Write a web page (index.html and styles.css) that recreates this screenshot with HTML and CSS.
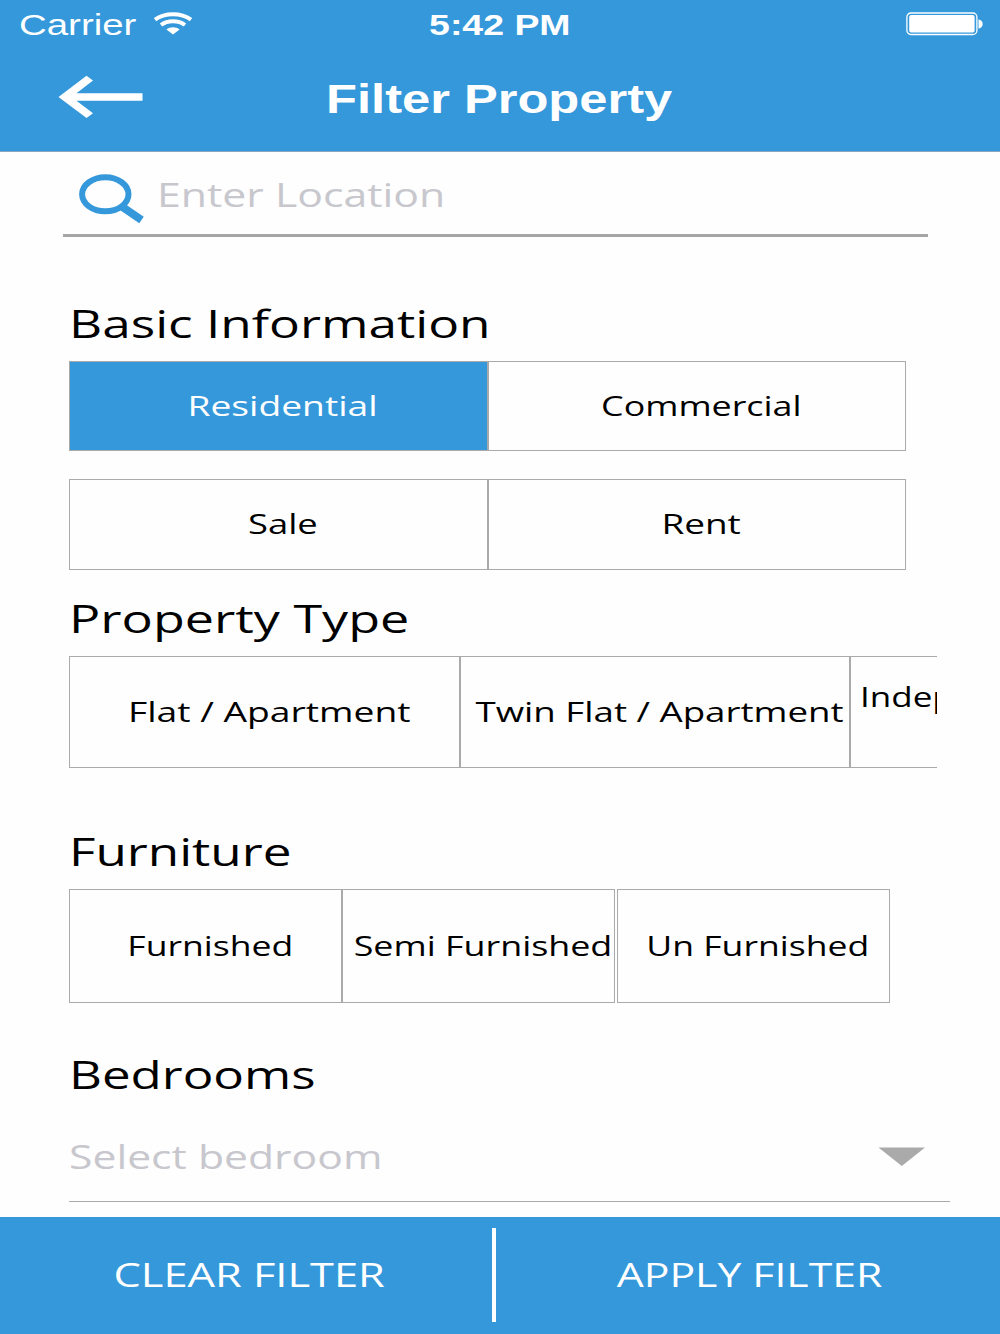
FILE: index.html
```html
<!DOCTYPE html>
<html lang="en">
<head>
    <meta charset="UTF-8">
    <meta name="viewport" content="width=device-width, initial-scale=1.0">
    <title>Filter Property</title>
    <link rel="stylesheet" href="styles.css">
</head>
<body>
    <header class="header">
        <div class="status-bar">
            <div class="carrier">
                <span class="wide carrier-name">Carrier</span>
                <svg class="wifi" width="40" height="24" viewBox="0 0 40 24" fill="none" stroke="#fff">
                    <path d="M2 7.6 C12 0.4 28 0.4 38 7.6" stroke-width="4"/>
                    <path d="M8 13 C14.5 8 25.5 8 32 13" stroke-width="3.8"/>
                    <path d="M13.4 17.6 C17 14.6 23 14.6 26.6 17.6 L20 22.5 Z" fill="#fff" stroke="none"/>
                </svg>
            </div>
            <span class="wide time">5:42 PM</span>
            <svg class="battery" width="78" height="24" viewBox="0 0 78 24">
                <rect x="0.9" y="1" width="70" height="21.5" rx="4" fill="none" stroke="#fff" stroke-width="1.3"/>
                <rect x="3.2" y="3" width="65.4" height="17.6" rx="2" fill="#fff"/>
                <path d="M72.5 7.5 C78 7.5 78 16.5 72.5 16.5 Z" fill="#fff"/>
            </svg>
        </div>
        <div class="nav-bar">
            <svg class="back" width="86" height="44" viewBox="0 0 86 44">
                <path d="M0.5 22 L28.5 0.8 L35 5.5 L18.5 18.3 H84.5 V25.7 H18.5 L35 38.2 L28.5 43 Z" fill="#fff"/>
            </svg>
            <h1 class="wide">Filter Property</h1>
        </div>
    </header>

    <main class="filters">
        <div class="search">
            <svg class="search-icon" width="68" height="52" viewBox="0 0 68 52" fill="none" stroke="#3498db">
                <ellipse cx="28.3" cy="21.3" rx="23.2" ry="17" stroke-width="6"/>
                <path d="M44 33 L64.5 47" stroke-width="8"/>
            </svg>
            <span class="wide placeholder location">Enter Location</span>
        </div>

        <section class="basic">
            <h2><span class="wide w-basic">Basic Information</span></h2>
            <div class="options">
                <div class="option active"><span class="wide w-residential">Residential</span></div>
                <div class="option"><span class="wide w-commercial">Commercial</span></div>
            </div>
            <div class="options second">
                <div class="option"><span class="wide w-sale">Sale</span></div>
                <div class="option"><span class="wide w-rent">Rent</span></div>
            </div>
        </section>

        <section class="type">
            <h2><span class="wide w-type">Property Type</span></h2>
            <div class="options scroller">
                <div class="option"><span class="wide w-flat">Flat / Apartment</span></div>
                <div class="option"><span class="wide w-twin">Twin Flat / Apartment</span></div>
                <div class="option house"><span class="wide w-house">Independent House</span></div>
            </div>
        </section>

        <section class="furniture">
            <h2><span class="wide w-furniture">Furniture</span></h2>
            <div class="options">
                <div class="option"><span class="wide w-furnished">Furnished</span></div>
                <div class="option"><span class="wide w-semi">Semi Furnished</span></div>
                <div class="option last"><span class="wide w-un">Un Furnished</span></div>
            </div>
        </section>

        <section class="bedrooms">
            <h2><span class="wide w-bedrooms">Bedrooms</span></h2>
            <div class="select">
                <span class="wide placeholder w-select">Select bedroom</span>
                <svg class="caret" width="48" height="20" viewBox="0 0 48 20">
                    <path d="M0.5 0.5 H47 L23.8 19 Z" fill="#aaa"/>
                </svg>
            </div>
        </section>
    </main>

    <footer class="footer">
        <div class="action clear"><span class="wide w-clear">CLEAR FILTER</span></div>
        <div class="divider"></div>
        <div class="action apply"><span class="wide w-apply">APPLY FILTER</span></div>
    </footer>
</body>
</html>
```

FILE: styles.css
```css
:root {
    --primary-color: #3498db;
    --line-color: #aaa;
    --placeholder-color: #c7c7cd;
}
* {
    box-sizing: border-box;
}
body {
    margin: 0;
    width: 1000px;
    height: 1334px;
    overflow: hidden;
    display: flex;
    flex-direction: column;
    background-color: #fefefe;
    color: #000;
    font-family: "Open Sans", "Noto Sans", sans-serif;
}
svg {
    display: block;
    flex: none;
}
/* labels are set in an extended width */
.wide {
    display: inline-block;
    white-space: nowrap;
    flex: none;
    transform: scaleX(var(--stretch, 1.3));
}
.w-basic { --stretch: 1.333; }
.w-type { --stretch: 1.352; }
.w-furniture { --stretch: 1.33; }
.w-bedrooms { --stretch: 1.325; }
.w-select { --stretch: 1.334; }
.w-residential { --stretch: 1.328; }
.w-commercial { --stretch: 1.28; }
.w-rent { --stretch: 1.32; }
.w-flat { --stretch: 1.33; }
.w-twin { --stretch: 1.31; }
.w-house { --stretch: 1.25; }
.w-furnished { --stretch: 1.27; }
.w-semi { --stretch: 1.28; }
.w-un { --stretch: 1.27; }
.w-clear { --stretch: 1.355; }
.w-apply { --stretch: 1.335; }

/* header */
.header {
    height: 152px;
    flex: none;
    background-color: var(--primary-color);
    border-bottom: 1px solid #8aa5c0;
    color: #fff;
    font-family: "Liberation Sans", Arial, sans-serif;
}
.status-bar {
    height: 48px;
    display: grid;
    grid-template-columns: 1fr auto 1fr;
    align-items: center;
    padding: 0 16px;
}
.carrier {
    display: flex;
    align-items: center;
    padding-left: 3px;
}
.carrier-name {
    --stretch: 1.28;
    width: 134px;
    margin-top: 2px;
    font-size: 30px;
    transform-origin: left;
}
.wifi {
    margin-top: -1px;
}
.time {
    --stretch: 1.29;
    margin-top: 2px;
    font-size: 29px;
    font-weight: bold;
}
.battery {
    justify-self: end;
}
.nav-bar {
    height: 103px;
    display: grid;
    grid-template-columns: 1fr auto 1fr;
    align-items: center;
    padding-left: 57px;
    padding-right: 59px;
}
.back {
    margin-top: -5px;
    margin-left: 1px;
}
h1 {
    --stretch: 1.235;
    margin: -2px 0 0;
    font-size: 41px;
    line-height: 46px;
    font-weight: bold;
}

/* search */
.search {
    width: 865px;
    height: 85px;
    margin-left: 63px;
    padding-left: 14px;
    display: flex;
    align-items: center;
    border-bottom: 3px solid #a6a6a6;
}
.search-icon {
    margin-top: 12px;
    margin-right: 12px;
}
.placeholder {
    font-size: 32px;
    line-height: 44px;
    color: var(--placeholder-color);
    transform-origin: left;
}
.location {
    --stretch: 1.337;
    margin-top: 3px;
}

/* option groups */
.filters {
    flex: 1;
}
section {
    padding-left: 69px;
}
h2 {
    margin: 0 0 16px;
    height: 44px;
    font-size: 38.5px;
    line-height: 44px;
    font-weight: normal;
}
h2 .wide {
    transform-origin: left;
}
.options {
    display: flex;
}
.option {
    display: flex;
    flex: none;
    align-items: center;
    justify-content: center;
    padding: 0 0 2px 9px;
    border: 1px solid var(--line-color);
    font-size: 28px;
    line-height: 36px;
}
.active {
    background-color: var(--primary-color);
    color: #fff;
}
.basic {
    margin-top: 64px;
}
.basic .option {
    width: 418.5px;
    height: 90px;
}
.second {
    margin-top: 28px;
}
.basic .second .option {
    height: 91px;
    padding-bottom: 3px;
}
.type {
    margin-top: 26px;
}
.scroller {
    width: 868px;
    overflow: hidden;
}
.type .option {
    width: 390.5px;
    height: 112px;
}
.type .house {
    justify-content: flex-start;
    padding-bottom: 32px;
}
.house .wide {
    transform-origin: left;
}
.furniture {
    margin-top: 61px;
}
.furniture .option {
    width: 273px;
    height: 114px;
}
.furniture .last {
    margin-left: 2px;
}
.bedrooms {
    margin-top: 49px;
}
.bedrooms h2 {
    margin-bottom: 0;
}
.select {
    width: 881px;
    height: 106px;
    padding: 17px 24px 0 0;
    display: flex;
    align-items: center;
    justify-content: space-between;
    border-bottom: 1px solid var(--line-color);
}

/* footer */
.footer {
    height: 117px;
    flex: none;
    display: flex;
    align-items: center;
    padding-bottom: 2px;
    background-color: var(--primary-color);
    color: #fff;
    font-size: 32px;
}
.action {
    display: flex;
    justify-content: center;
}
.clear {
    width: 492px;
    padding-left: 7px;
}
.apply {
    flex: 1;
    padding-left: 2px;
}
.divider {
    width: 4px;
    height: 94px;
    background-color: #fff;
}
```
